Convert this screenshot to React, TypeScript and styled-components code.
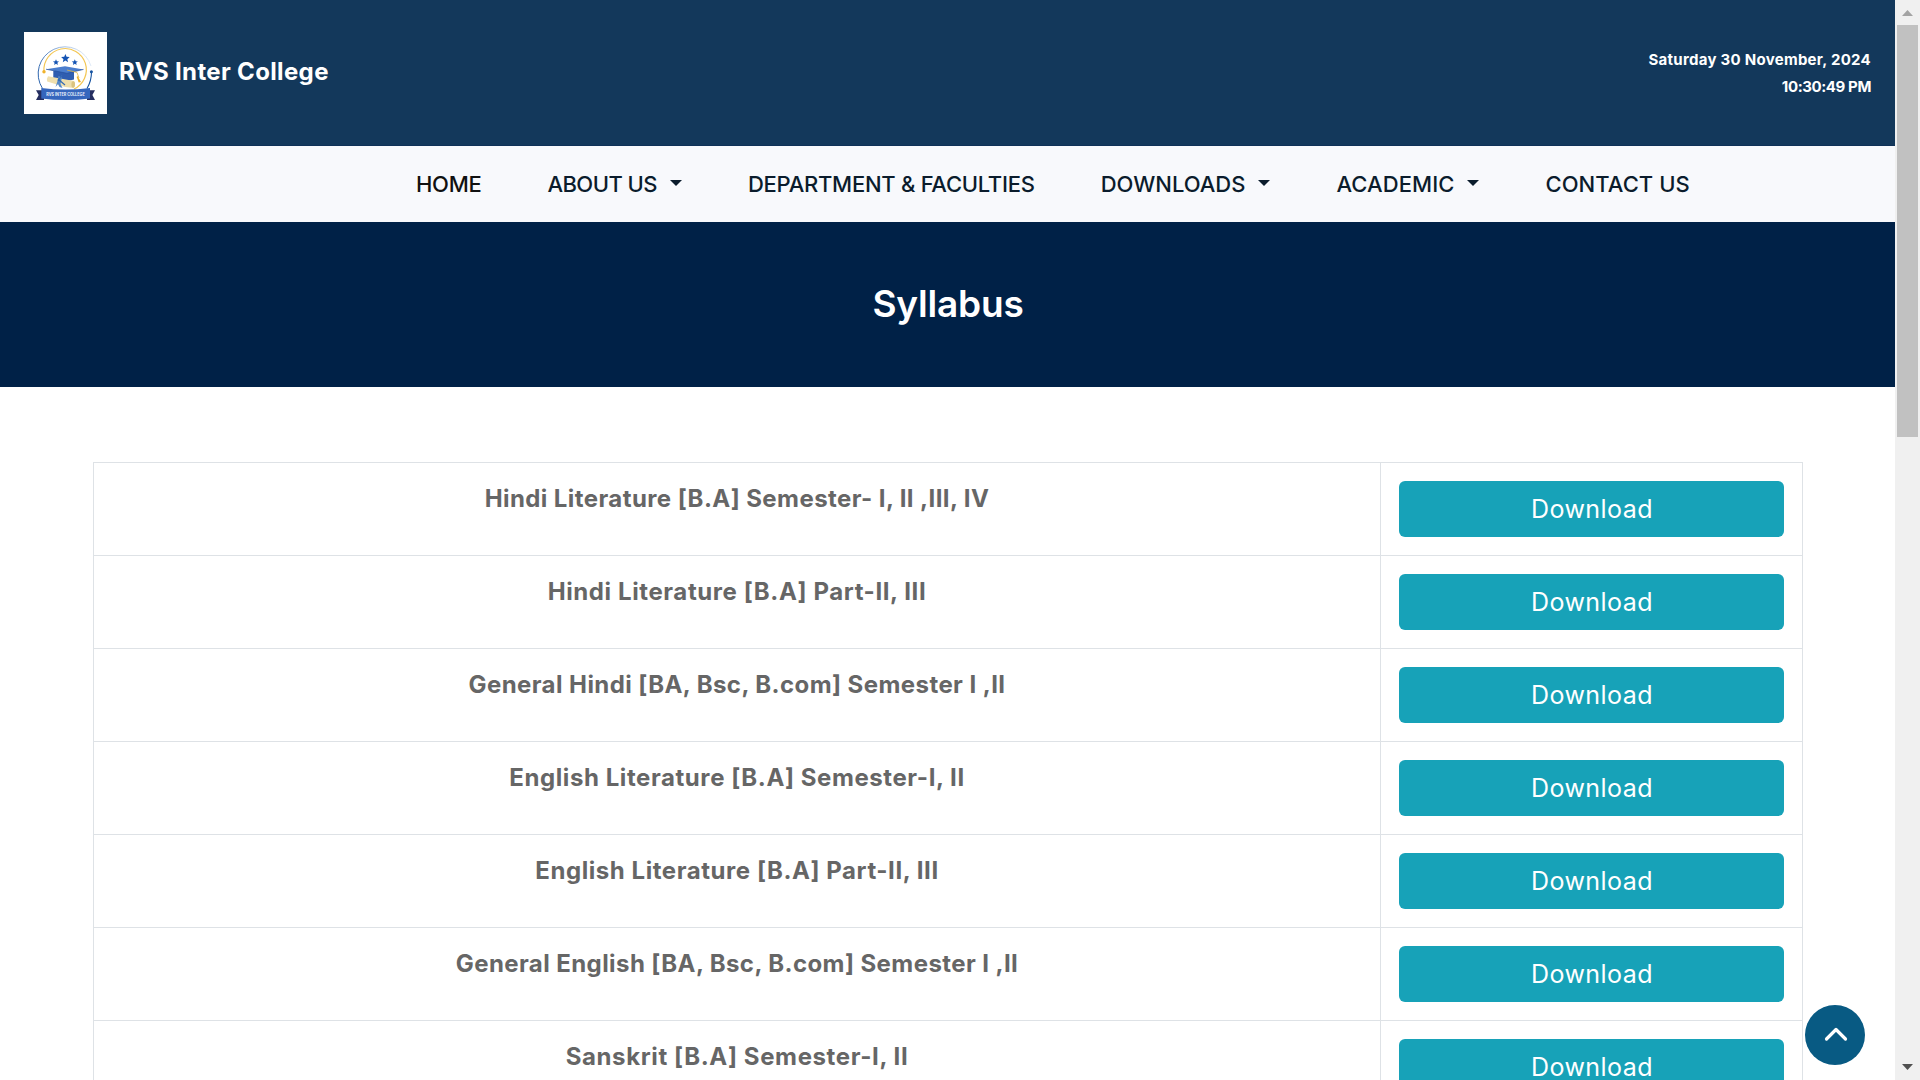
import React from "react";
import styled, { createGlobalStyle } from "styled-components";

const GlobalStyle = createGlobalStyle`
  * { box-sizing: border-box; }
  html, body { margin: 0; padding: 0; overflow: hidden; }
  body { background: #fff; font-family: Inter, "Open Sans", sans-serif; }
`;

const Screen = styled.div`
  display: flex;
  width: 1920px;
  height: 1080px;
  overflow: hidden;
`;

const Page = styled.div`
  flex: none;
  width: 1895px;
  height: 1080px;
  overflow: hidden;
  display: flex;
  flex-direction: column;
`;

const Header = styled.header`
  flex: none;
  height: 146px;
  padding: 0 24px;
  display: flex;
  align-items: center;
  justify-content: space-between;
  background: #13385b;
  border-bottom: 1px solid #0f3158;
  color: #fff;
`;

const Brand = styled.div`
  display: flex;
  align-items: center;
  gap: 12px;
`;

const LogoBox = styled.div`
  width: 83px;
  height: 82px;
  background: #fff;
  svg { display: block; }
`;

const BrandName = styled.h1`
  margin: 0;
  padding-bottom: 1px;
  font-size: 24px;
  line-height: 36px;
  font-weight: 700;
  letter-spacing: 0.35px;
  white-space: nowrap;
`;

const Clock = styled.div`
  display: flex;
  flex-direction: column;
  align-items: flex-end;
`;

const ClockLine = styled.span<{ $track: number }>`
  font-size: 15px;
  line-height: 27px;
  font-weight: 700;
  letter-spacing: ${(p) => p.$track}px;
  white-space: nowrap;
`;

const Nav = styled.nav`
  flex: none;
  height: 76px;
  padding-left: 416px;
  display: flex;
  align-items: center;
  gap: 66px;
  background: #f8f9fc;
`;

const NavItem = styled.a<{ $track: number; $dark?: boolean }>`
  display: flex;
  align-items: center;
  font-size: 22px;
  line-height: 34px;
  font-weight: 500;
  letter-spacing: ${(p) => p.$track}px;
  color: ${(p) => (p.$dark ? "#111" : "#0b1c2c")};
  white-space: nowrap;
`;

const Caret = styled.span`
  margin: 0 0 2px 13px;
  border-left: 6px solid transparent;
  border-right: 6px solid transparent;
  border-top: 6px solid #0b1c2c;
`;

const Hero = styled.section`
  flex: none;
  height: 165px;
  padding-bottom: 2px;
  display: flex;
  align-items: center;
  justify-content: center;
  background: #002147;
`;

const HeroTitle = styled.h2`
  margin: 0;
  padding-left: 1px;
  font-size: 37px;
  line-height: 48px;
  font-weight: 600;
  letter-spacing: -0.19px;
  color: #fff;
`;

const Table = styled.div`
  flex: none;
  width: 1710px;
  margin: 75px 0 0 93px;
  border: 1px solid #dee2e6;
  border-bottom: 0;
`;

const Row = styled.div`
  display: grid;
  grid-template-columns: 1286px 1fr;
  height: 93px;
  border-bottom: 1px solid #dee2e6;
`;

const SubjectCell = styled.div<{ $track: number }>`
  padding-top: 18px;
  text-align: center;
  font-size: 24px;
  line-height: 36px;
  font-weight: 700;
  letter-spacing: ${(p) => p.$track}px;
  color: #666;
`;

const ActionCell = styled.div`
  padding: 18px;
  border-left: 1px solid #dee2e6;
`;

const DownloadButton = styled.button`
  display: block;
  width: 100%;
  height: 56px;
  padding: 0 0 1px 1px;
  border: 0;
  border-radius: 6px;
  background: #17a2b8;
  color: #fff;
  font-family: inherit;
  font-size: 25px;
  font-weight: 400;
  letter-spacing: 0.45px;
`;

const BackToTop = styled.button`
  position: fixed;
  left: 1805px;
  top: 1005px;
  width: 60px;
  height: 60px;
  padding: 0;
  border: 0;
  border-radius: 50%;
  background: #085a83;
  svg { display: block; }
`;

const Scrollbar = styled.div`
  flex: none;
  width: 25px;
  height: 1080px;
  background: #f0f0f0;
  display: flex;
  flex-direction: column;
  align-items: center;
  justify-content: space-between;
`;

const ScrollTop = styled.div`
  display: flex;
  flex-direction: column;
  align-items: center;
`;

const Thumb = styled.div`
  width: 21px;
  height: 412px;
  background: #c1c1c1;
`;

const ScrollArrow = styled.svg`
  display: block;
  width: 25px;
  height: 25px;
`;

const star = (cx: number, cy: number, r: number) =>
  Array.from({ length: 10 }, (_, i) => {
    const a = (Math.PI / 5) * i - Math.PI / 2;
    const d = i % 2 ? r * 0.45 : r;
    return `${cx + d * Math.cos(a)},${cy + d * Math.sin(a)}`;
  }).join(" ");

const Logo = () => (
  <svg width="83" height="82" viewBox="0 0 83 82">
    <defs>
      <linearGradient id="ring" x1="0" y1="0.6" x2="1" y2="0.3">
        <stop offset="0" stopColor="#2f66ae" />
        <stop offset="0.5" stopColor="#8fb0dc" />
        <stop offset="1" stopColor="#e6effa" />
      </linearGradient>
    </defs>
    <path d="M18.5 56.5A27 27 0 1 1 67 34" fill="none" stroke="url(#ring)" strokeWidth="1" />
    <path d="M67.5 40Q67.5 49 63 56.5" fill="none" stroke="#1552a0" strokeWidth="1.1" />
    <circle cx="67.4" cy="39.7" r="1.5" fill="#1552a0" />
    <path d="M20 39.5A21.2 21.2 0 1 1 50 57" fill="none" stroke="#f3c653" strokeWidth="1.2" />
    <circle cx="20" cy="39.7" r="1.7" fill="#f0b32c" />
    <polygon points={star(32, 30.4, 3.2)} fill="#1554b4" />
    <polygon points={star(41.4, 26.5, 4.5)} fill="#1554b4" />
    <polygon points={star(50.8, 30.4, 3.2)} fill="#1554b4" />
    <path d="M29.3 39H50V47.5Q42 50 29.3 46Z" fill="#2f5db0" />
    <polygon points="22,37.2 41,34.3 59.5,37.4 43,41.3" fill="#4a7dce" />
    <path d="M22 37.2L43 41.3L59.5 37.4" fill="none" stroke="#244f9c" strokeWidth=".7" />
    <path d="M43 38L53 40.5L55 46" fill="none" stroke="#e5b540" strokeWidth=".8" />
    <path d="M53.5 44L57 50L54.7 50.5L52.7 45Z" fill="#eeb22b" />
    <path d="M24 44.3L50 49Q52 52 49.5 56L41 55L23.2 49.5Q22.4 46.5 24 44.3Z" fill="#efdfad" />
    <ellipse cx="49.2" cy="52.5" rx="1.8" ry="3.2" fill="#dbc37f" />
    <path d="M34.5 44L38 45.5L36.5 52L38.5 56L35.5 55L34 52L31.5 55L33.5 49Z" fill="#5589c9" />
    <path d="M34 47L41 53M38 43L34 49" stroke="#356bb4" strokeWidth="1.2" />
    <path d="M12 58.3H20V68H12L14.7 63Z" fill="#252e60" />
    <path d="M71 58.3H63V68H71L68.4 63Z" fill="#252e60" />
    <path d="M17.3 56Q41.5 59 66 56V66.5Q41.5 69.5 17.3 66.5Z" fill="#3566bd" />
    <text x="41.5" y="64" textAnchor="middle" fontFamily="Inter, sans-serif" fontWeight="700" fontSize="4.6" textLength="38.5" lengthAdjust="spacingAndGlyphs" fill="#e8eefa">
      RVS INTER COLLEGE
    </text>
  </svg>
);

const navItems = [
  { label: "HOME", track: -0.3, dark: true },
  { label: "ABOUT US", track: -0.55, menu: true },
  { label: "DEPARTMENT & FACULTIES", track: -0.27 },
  { label: "DOWNLOADS", track: 0, menu: true },
  { label: "ACADEMIC", track: 0.08, menu: true },
  { label: "CONTACT US", track: 0.05 },
];

const subjects = [
  { name: "Hindi Literature [B.A] Semester- I, II ,III, IV", track: 0.42 },
  { name: "Hindi Literature [B.A] Part-II, III", track: 0.6 },
  { name: "General Hindi [BA, Bsc, B.com] Semester I ,II", track: 0.43 },
  { name: "English Literature [B.A] Semester-I, II", track: 0.58 },
  { name: "English Literature [B.A] Part-II, III", track: 0.56 },
  { name: "General English [BA, Bsc, B.com] Semester I ,II", track: 0.42 },
  { name: "Sanskrit [B.A] Semester-I, II", track: 0.62 },
];

export default function App() {
  return (
    <Screen>
      <GlobalStyle />
      <Page>
        <Header>
          <Brand>
            <LogoBox><Logo /></LogoBox>
            <BrandName>RVS Inter College</BrandName>
          </Brand>
          <Clock>
            <ClockLine $track={0.28}>Saturday 30 November, 2024</ClockLine>
            <ClockLine $track={-0.4}>10:30:49 PM</ClockLine>
          </Clock>
        </Header>
        <Nav>
          {navItems.map((n) => (
            <NavItem key={n.label} $track={n.track} $dark={n.dark}>
              {n.label}
              {n.menu && <Caret />}
            </NavItem>
          ))}
        </Nav>
        <Hero><HeroTitle>Syllabus</HeroTitle></Hero>
        <Table>
          {subjects.map((s) => (
            <Row key={s.name}>
              <SubjectCell $track={s.track}>{s.name}</SubjectCell>
              <ActionCell><DownloadButton>Download</DownloadButton></ActionCell>
            </Row>
          ))}
        </Table>
      </Page>
      <Scrollbar>
        <ScrollTop>
          <ScrollArrow viewBox="0 0 25 25"><path d="M7 16L12.5 10L18 16Z" fill="#a3a3a3" /></ScrollArrow>
          <Thumb />
        </ScrollTop>
        <ScrollArrow viewBox="0 0 25 25"><path d="M7 9L12.5 15L18 9Z" fill="#505050" /></ScrollArrow>
      </Scrollbar>
      <BackToTop aria-label="Back to top">
        <svg width="60" height="60" viewBox="0 0 60 60">
          <path d="M21.5 34L31 24.5L40.5 34" fill="none" stroke="#fff" strokeWidth="3.2" strokeLinecap="round" strokeLinejoin="round" />
        </svg>
      </BackToTop>
    </Screen>
  );
}
